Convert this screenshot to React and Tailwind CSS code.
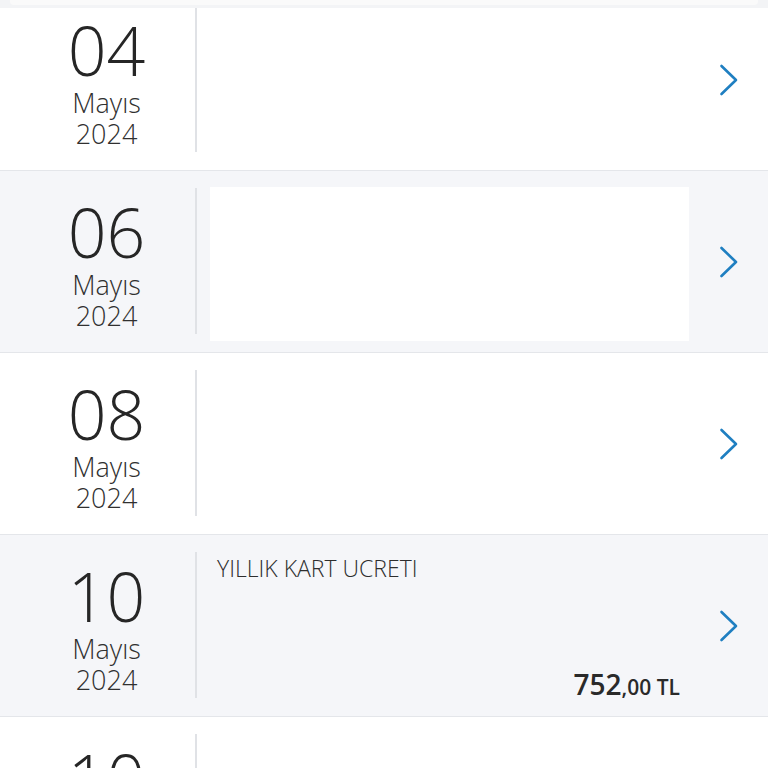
import React from 'react';

const rows = [
  { day: '04', bg: 'bg-white' },
  { day: '06', bg: 'bg-[#f5f6f9]', blank: true },
  { day: '08', bg: 'bg-white' },
  { day: '10', bg: 'bg-[#f5f6f9]', title: 'YILLIK KART UCRETI', amount: '752', cents: ',00 TL' },
  { day: '10', bg: 'bg-white' },
];

function Chevron() {
  return (
    <svg width="20" height="32" viewBox="0 0 20 32" fill="none">
      <polyline
        points="2.5,2 17,16 2.5,30"
        stroke="#1f7fc1"
        strokeWidth="2.6"
        strokeLinecap="round"
        strokeLinejoin="round"
      />
    </svg>
  );
}

function Row({ row }) {
  return (
    <div className={`flex h-[182px] shrink-0 border-b border-[#e4e6ea] ${row.bg}`}>
      {/* Date */}
      <div className="flex w-[197px] shrink-0">
        <div className="mt-[17px] mb-[18px] flex w-full flex-col items-center border-r-2 border-[#e0e2e6] pl-[18px] pt-[6px]">
          <div className="text-[68px] font-light leading-[75px] text-[#262626]">{row.day}</div>
          <div className="text-[27px] font-light leading-[31px] text-[#303030]">Mayıs</div>
          <div className="text-[27px] font-light leading-[32px] text-[#303030]">2024</div>
        </div>
      </div>

      {/* Content */}
      <div className="flex min-w-0 flex-1 flex-col">
        {row.blank && <div className="mt-[16px] mb-[11px] ml-[13px] flex-1 bg-white" />}
        {row.title && (
          <div className="flex flex-1 flex-col pt-[19px] pl-[20px] pr-[9px] pb-[18px]">
            <div className="text-[23px] font-light leading-[28px] text-[#2e2e2e]">{row.title}</div>
            <div className="mt-auto flex items-baseline justify-end text-[#2a2a2a]">
              <span className="text-[28px] font-semibold leading-none">{row.amount}</span>
              <span className="text-[21px] font-semibold leading-none">{row.cents}</span>
            </div>
          </div>
        )}
      </div>

      {/* Arrow */}
      <div className="flex w-[79px] shrink-0 items-center justify-center">
        <Chevron />
      </div>
    </div>
  );
}

export default function App() {
  return (
    <div
      className="relative h-[768px] w-[768px] overflow-hidden bg-white"
      style={{ fontFamily: '"Open Sans", "Noto Sans", sans-serif' }}
    >
      <div className="-mt-[11px] flex flex-col">
        {rows.map((row, i) => (
          <Row key={i} row={row} />
        ))}
      </div>
      {/* header edge lying over the list */}
      <div className="absolute inset-x-0 top-0 h-[8px] bg-[#f3f4f6]">
        <div className="mx-[10px] h-[5px] rounded-b bg-[#fafafa]" />
      </div>
    </div>
  );
}
